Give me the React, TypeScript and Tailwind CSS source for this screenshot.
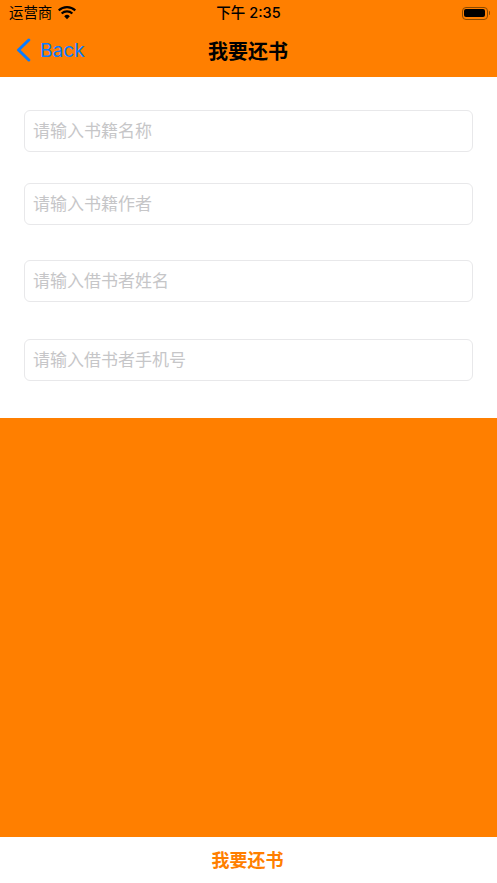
const font = { fontFamily: '"Inter","Noto Sans CJK SC",sans-serif' };

function Field({ text, className }: { text: string; className: string }) {
  return (
    <div className={`h-[42px] rounded-[6px] border border-[#e8e8ea] pl-[8px] flex items-center text-[17px] leading-none text-[#c6c6c8] bg-white ${className}`}>
      {text}
    </div>
  );
}

export default function App() {
  return (
    <div className="w-[497px] h-[883px] flex flex-col bg-[#ff7f00] overflow-hidden font-['Inter','Noto_Sans_CJK_SC',sans-serif]">
      <div className="h-[26px] flex items-center justify-between pl-[9px] pr-[7px] text-black">
        <div className="flex items-center gap-[6px]">
          <span className="text-[14.4px] leading-none">运营商</span>
          <svg width="18" height="14" viewBox="0 0 18 14" className="mb-[1px]">
            <path d="M9 13.2 6.2 10.2a4 4 0 0 1 5.6 0Z" fill="#000" />
            <path d="M4.4 8.3a6.6 6.6 0 0 1 9.2 0l1.5-1.6a8.8 8.8 0 0 0-12.2 0Z" fill="#000" />
            <path d="M1.4 5.2a11 11 0 0 1 15.2 0L18 3.6a13.1 13.1 0 0 0-18 0Z" fill="#000" />
          </svg>
        </div>
        <div className="flex items-center">
          <div className="w-[26px] h-[13px] rounded-[4px] border border-[#8a4a00] p-[1.5px]">
            <div className="w-full h-full rounded-[2px] bg-black" />
          </div>
          <div className="w-[1.5px] h-[4px] ml-[1px] rounded-r-sm bg-[#8a4a00]" />
        </div>
      </div>
      <div className="h-[51px] relative flex items-center justify-center">
        <div className="absolute left-[16px] top-[12px] flex items-center gap-[9px] text-[#0a7cff]">
          <svg width="15" height="24" viewBox="0 0 15 24" fill="none" stroke="currentColor" strokeWidth="3" strokeLinecap="round" strokeLinejoin="round">
            <path d="M12.8 2 2.5 12l10.3 10" />
          </svg>
          <span className="text-[19.2px] leading-none mt-[2px]">Back</span>
        </div>
        <span className="text-[20px] font-semibold leading-none text-black mr-[1px]">我要还书</span>
      </div>
      <div className="absolute left-0 top-0 w-[497px] h-[26px] flex items-center justify-center pointer-events-none">
        <span className="text-[14.5px] font-medium leading-none text-black" style={font}>下午 2:35</span>
      </div>
      <div className="h-[341px] bg-white px-[24px] pt-[33px] flex flex-col">
        <Field text="请输入书籍名称" className="" />
        <Field text="请输入书籍作者" className="mt-[31px]" />
        <Field text="请输入借书者姓名" className="mt-[35px]" />
        <Field text="请输入借书者手机号" className="mt-[37px]" />
      </div>
      <div className="flex-1" />
      <div className="h-[46px] bg-white flex items-center justify-center pt-[1px] pr-[2px] text-[18px] font-semibold leading-none text-[#ff7f00]">
        我要还书
      </div>
    </div>
  );
}
